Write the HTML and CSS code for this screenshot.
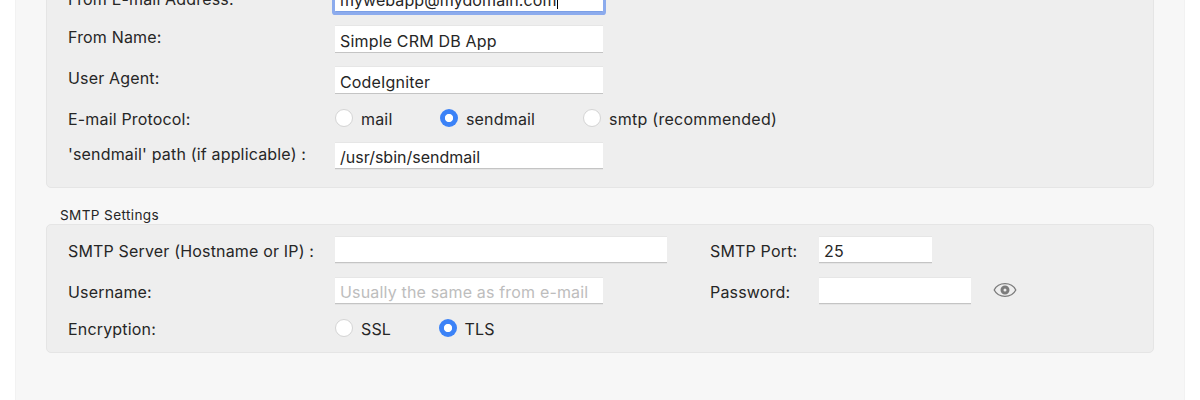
FILE: index.html
```
<!DOCTYPE html>
<html lang="en">
<head>
<meta charset="utf-8">
<title>E-mail Settings</title>
<link rel="stylesheet" href="styles.css">
</head>
<body>
<main class="panel">
  <section class="group group-mail">
    <div class="row row-address">
      <span class="label">From E-mail Address:</span>
      <div class="field focused"><span class="value">mywebapp@mydomain.com</span><i class="caret"></i></div>
    </div>
    <div class="row row-name">
      <span class="label">From Name:</span>
      <div class="field"><span class="value">Simple CRM DB App</span></div>
    </div>
    <div class="row row-agent">
      <span class="label">User Agent:</span>
      <div class="field"><span class="value">CodeIgniter</span></div>
    </div>
    <div class="row row-protocol">
      <span class="label">E-mail Protocol:</span>
      <div class="choices protocols">
        <div class="choice"><i class="radio"></i><span>mail</span></div>
        <div class="choice"><i class="radio on"></i><span>sendmail</span></div>
        <div class="choice"><i class="radio"></i><span class="smtp">smtp (recommended)</span></div>
      </div>
    </div>
    <div class="row row-path">
      <span class="label">'sendmail' path (if applicable) :</span>
      <div class="field"><span class="value path">/usr/sbin/sendmail</span></div>
    </div>
  </section>
  <h2 class="group-title">SMTP Settings</h2>
  <section class="group group-smtp">
    <div class="row row-server">
      <span class="label">SMTP Server (Hostname or IP) :</span>
      <div class="field wide"></div>
      <span class="label second">SMTP Port:</span>
      <div class="field port"><span class="value">25</span></div>
    </div>
    <div class="row row-user">
      <span class="label">Username:</span>
      <div class="field"><span class="value placeholder">Usually the same as from e-mail</span></div>
      <span class="label second">Password:</span>
      <div class="field password"></div>
      <svg class="eye" width="24" height="16" viewBox="0 0 24 16">
        <path d="M1.200 8C5.500-.4 18.500-.4 22.800 8C18.500 16.400 5.500 16.400 1.200 8Z" fill="none" stroke="#7c7c7c" stroke-width="1.300"/>
        <circle cx="12" cy="8" r="3" fill="none" stroke="#7c7c7c" stroke-width="3"/>
      </svg>
    </div>
    <div class="row row-encryption">
      <span class="label">Encryption:</span>
      <div class="choices encryptions">
        <div class="choice"><i class="radio"></i><span>SSL</span></div>
        <div class="choice"><i class="radio on"></i><span>TLS</span></div>
      </div>
    </div>
  </section>
</main>
</body>
</html>
```
FILE: styles.css
```
* { box-sizing: border-box; }
body {
  margin: 0;
  height: 400px;
  overflow: hidden;
  background: #fff;
  color: #262626;
  font: 16px/20px Inter, "Liberation Sans", sans-serif;
  letter-spacing: .17px;
  white-space: nowrap;
}
.panel {
  display: flow-root;
  height: 400px;
  margin: 0 15px;
  padding: 0 30px;
  background: #f7f7f7;
  border: solid #f2f2f2;
  border-width: 0 1px;
  overflow: hidden;
}
.group {
  background: #eee;
  border: 1px solid #e5e5e5;
  border-radius: 5px;
  padding-left: 21px;
}
.group-mail { height: 218px; margin-top: -30px; padding-top: 13px; }
.group-smtp { height: 129px; padding-top: 11px; }
.group-title {
  margin: 17px 0 0 14px;
  height: 19px;
  font-size: 13.600px;
  font-weight: 400;
  line-height: 21px;
  letter-spacing: .36px;
}
.row {
  display: grid;
  grid-template-columns: 267px 375px 109px 174px auto;
  align-items: start;
  height: 41px;
}
.label { padding-top: 5px; }
.row-name .label, .row-agent .label { padding-top: 2px; }
.row-protocol { height: 35px; }
.row-protocol .label { padding-top: 2px; }
.row-path .label { padding-top: 2px; }
.row-encryption .label { padding-top: 1px; }
.field {
  display: flex;
  align-items: center;
  width: 268px;
  height: 27px;
  padding: 3px 5px 0;
  background: #fff;
  border-top: 1px solid #e6e6e6;
  border-bottom: 1px solid #c4c4c4;
  box-shadow: 0 1px 0 #e4e4e4;
}
.row-name .field, .row-agent .field { height: 28px; padding-top: 4px; box-shadow: none; }
.row-address .focused {
  height: 28px;
  padding-top: 3px;
  border-bottom-color: #7b9fe6;
  border-radius: 1px;
  box-shadow: 0 0 0 3px #8cabed;
}
.focused .value { letter-spacing: .1px; }
.path { letter-spacing: 0; }
.smtp { letter-spacing: .27px; }
.caret { width: 1px; height: 18px; background: #000; }
.wide { width: 332px; }
.port { width: 113px; }
.password { width: 152px; }
.placeholder { color: #bdbdbd; }
.eye { margin: 5px 0 0 -.5px; }
.choices { display: grid; }
.protocols { grid-template-columns: 105px 143px auto; margin-top: 1px; }
.encryptions { grid-template-columns: 103.500px auto; }
.choice { display: flex; align-items: center; gap: 8px; height: 20px; }
.choice span { padding-top: 2px; }
.radio {
  width: 18px;
  height: 18px;
  border: 1px solid #d4d4d4;
  border-radius: 50%;
  background: #fff;
}
.radio.on {
  border: 0;
  background: radial-gradient(circle, #fff 3.700px, #3b82f7 4.500px);
}
```
